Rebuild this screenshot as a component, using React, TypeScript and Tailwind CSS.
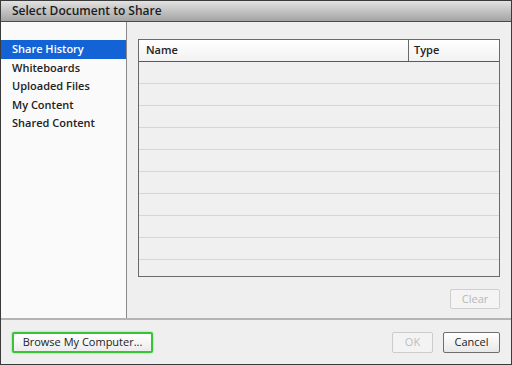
import React from 'react';

const items = ['Share History', 'Whiteboards', 'Uploaded Files', 'My Content', 'Shared Content'];

export default function App() {
  const rows = Array.from({ length: 10 });
  return (
    <div
      className="w-[512px] h-[365px] flex flex-col border border-[#3a3a3a] bg-[#efefef] overflow-hidden"
      style={{ fontFamily: '"Open Sans", "Noto Sans", sans-serif' }}
    >
      <div className="h-[21px] shrink-0 flex items-center px-[11px] bg-gradient-to-b from-[#e2e2e2] to-[#a4a4a4] border-b border-[#4a4a4a] text-[12px] font-semibold text-[#1c1c1c]">
        Select Document to Share
      </div>

      <div className="flex flex-1 min-h-0">
        <div className="w-[126px] shrink-0 bg-[#fafafa] border-r border-[#8a8a8a] pt-[18px]">
          {items.map((it, i) => (
            <div
              key={it}
              className={`h-[18.5px] flex items-center px-[11px] text-[11px] font-semibold ${
                i === 0 ? 'bg-[#1463d6] text-white' : 'text-[#222]'
              }`}
            >
              {it}
            </div>
          ))}
        </div>

        <div className="flex-1 flex flex-col pt-[17px] pl-[11px] pr-[11px]">
          <div className="h-[238px] border border-[#6a6a6a] bg-[#f0f0f0] flex flex-col overflow-hidden">
            <div className="h-[22px] shrink-0 flex border-b border-[#5a5a5a] bg-gradient-to-b from-white to-[#f2f2f2] text-[11px] font-semibold text-[#222]">
              <div className="w-[270px] border-r border-[#6a6a6a] flex items-center pl-[7px]">Name</div>
              <div className="flex-1 flex items-center pl-[5px]">Type</div>
            </div>
            {rows.map((_, i) => (
              <div key={i} className="h-[22px] shrink-0 border-b border-[#d6d6d6]" />
            ))}
          </div>
          <div className="flex justify-end mt-[12px]">
            <button className="w-[50px] h-[20px] border border-[#cfcfcf] rounded-[2px] bg-[#f4f4f4] text-[11px] text-[#b8b8b8]">
              Clear
            </button>
          </div>
        </div>
      </div>

      <div className="h-[46px] shrink-0 border-t-2 border-[#b4b4b4] flex items-center px-[11px]">
        <button className="w-[141px] h-[21px] border-2 border-[#37c437] rounded-[2px] bg-gradient-to-b from-white to-[#ececec] text-[11px] text-[#222] shadow-[0_0_2px_#6d6]">
          Browse My Computer...
        </button>
        <div className="flex-1" />
        <button className="w-[41px] h-[21px] border border-[#cccccc] rounded-[2px] bg-[#f3f3f3] text-[11px] text-[#bdbdbd] mr-[10px]">
          OK
        </button>
        <button className="w-[57px] h-[21px] border border-[#6e6e6e] rounded-[2px] bg-gradient-to-b from-white to-[#e8e8e8] text-[11px] text-[#222]">
          Cancel
        </button>
      </div>
    </div>
  );
}
